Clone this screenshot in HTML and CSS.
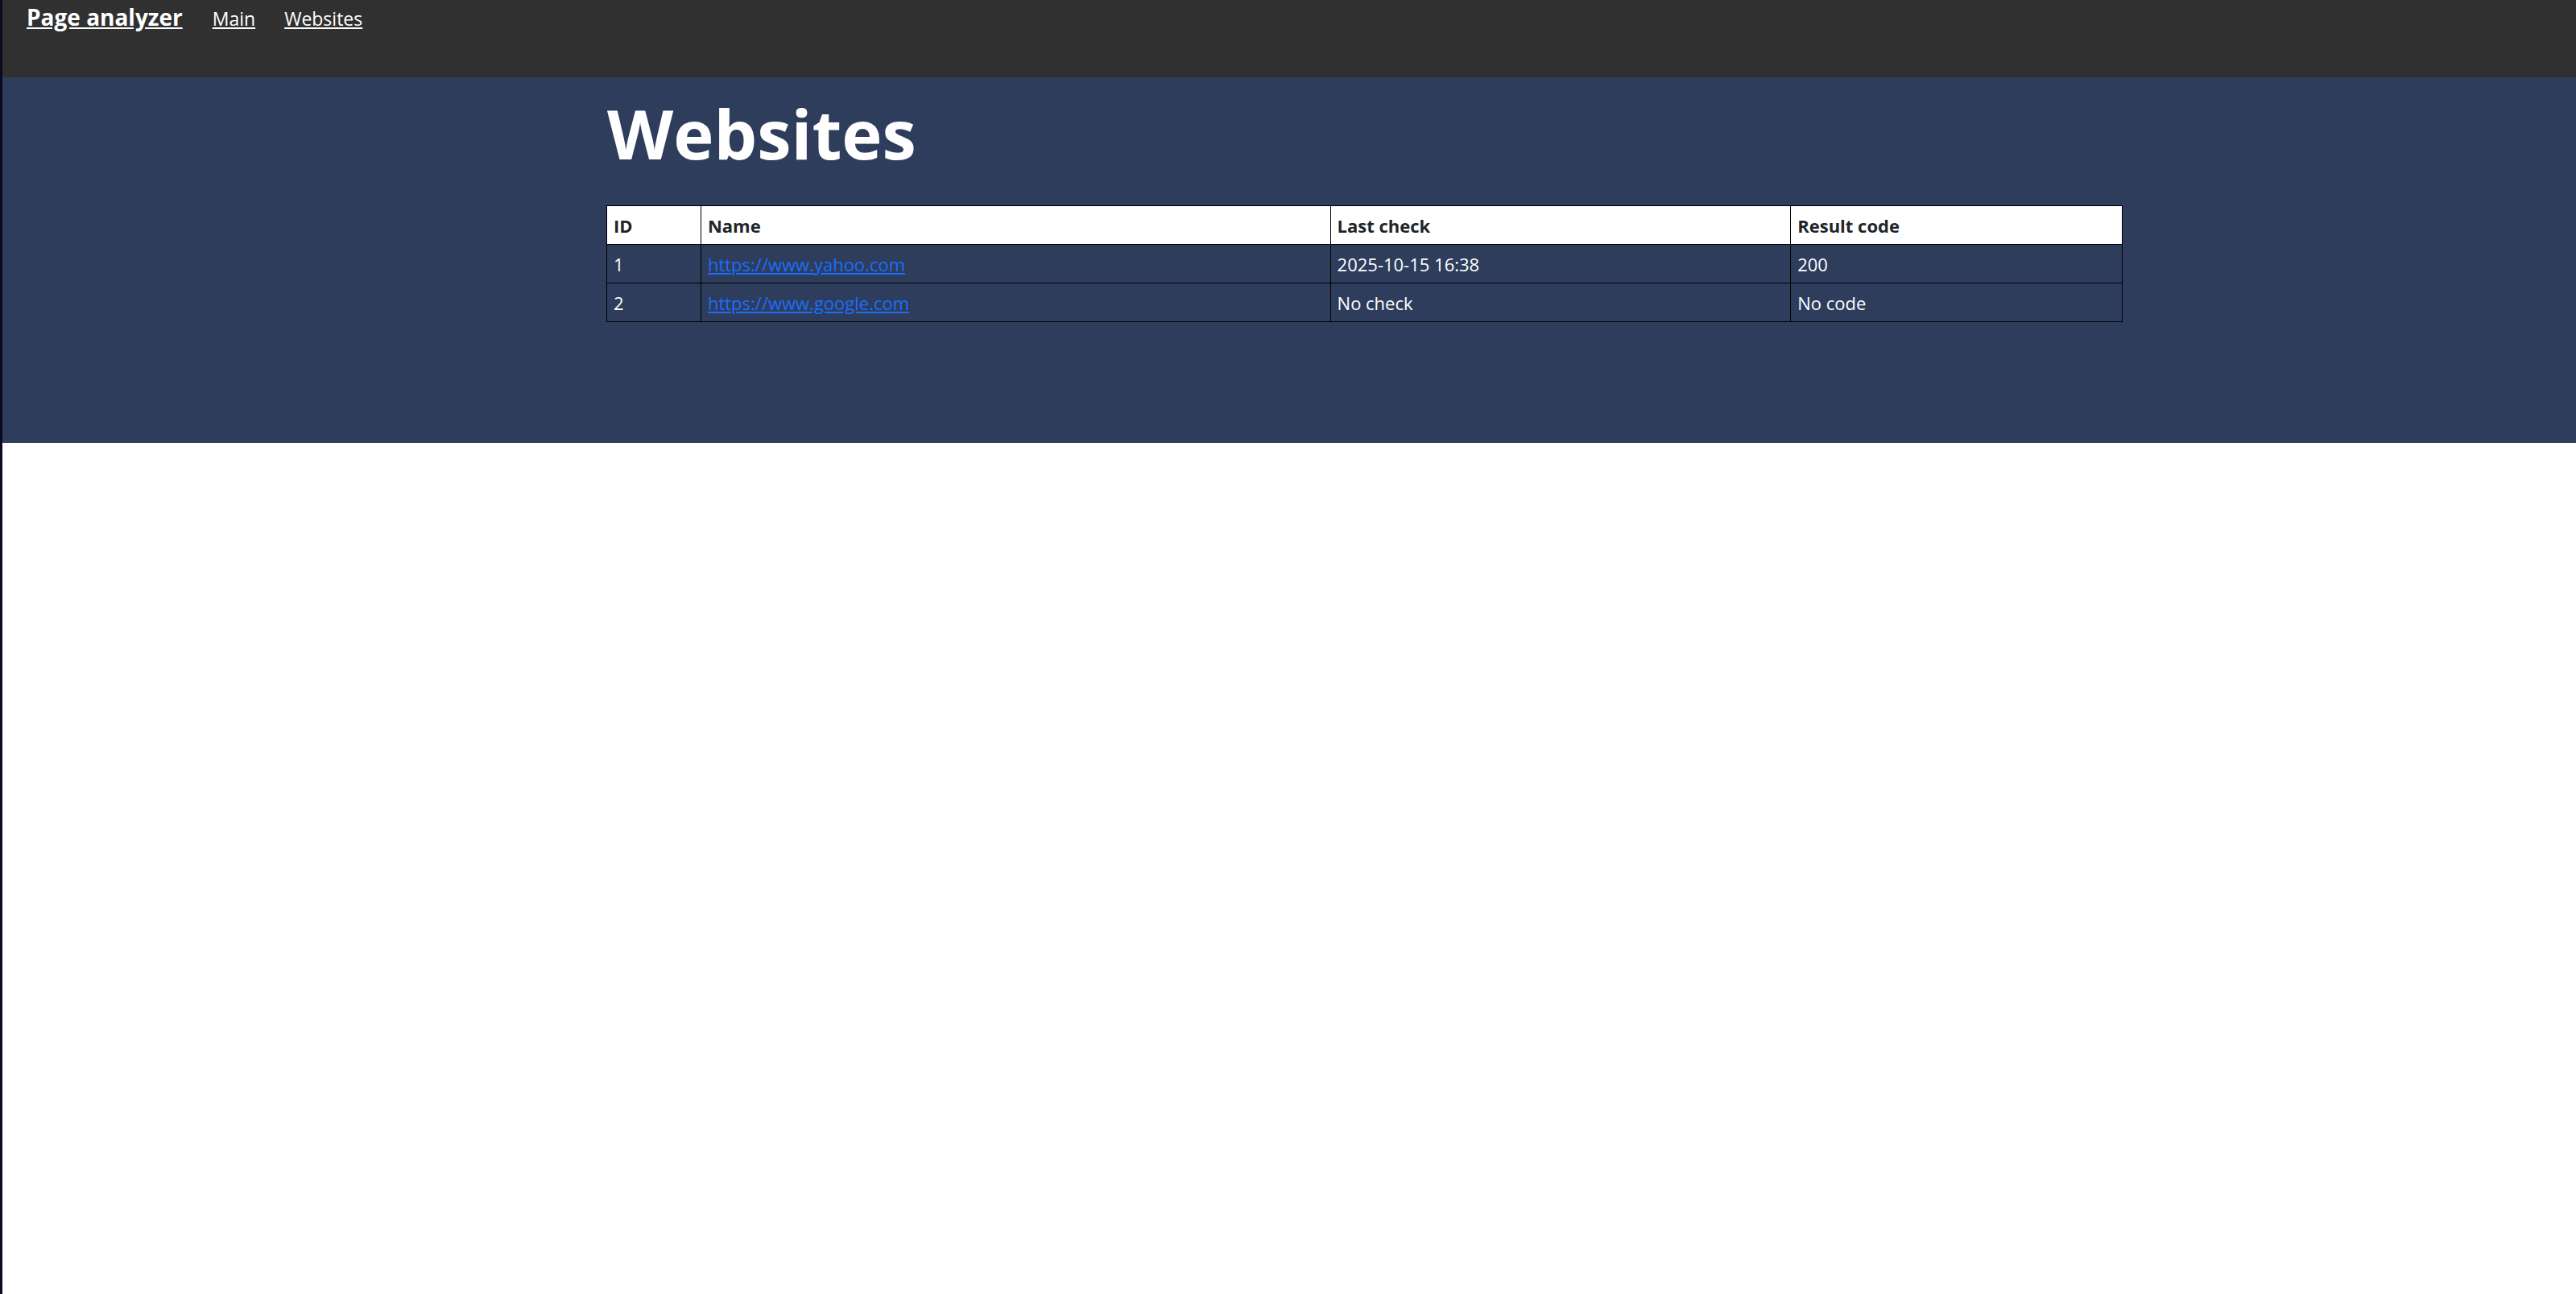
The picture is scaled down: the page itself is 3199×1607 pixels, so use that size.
FILE: index.html
```html
<!DOCTYPE html>
<html lang="en">
<head>
<meta charset="utf-8">
<title>Page analyzer</title>
<link rel="stylesheet" href="styles.css">
</head>
<body>
<header class="navbar">
  <a class="brand" href="#">Page analyzer</a>
  <nav class="nav-links">
    <a href="#">Main</a>
    <a href="#">Websites</a>
  </nav>
</header>
<main class="hero">
  <div class="container">
    <h1 class="title">Websites</h1>
    <table class="sites">
      <thead>
        <tr>
          <th class="col-id">ID</th>
          <th class="col-name">Name</th>
          <th class="col-check">Last check</th>
          <th class="col-code">Result code</th>
        </tr>
      </thead>
      <tbody>
        <tr>
          <td>1</td>
          <td><a href="#">https://www.yahoo.com</a></td>
          <td>2025-10-15 16:38</td>
          <td>200</td>
        </tr>
        <tr>
          <td>2</td>
          <td><a href="#">https://www.google.com</a></td>
          <td>No check</td>
          <td>No code</td>
        </tr>
      </tbody>
    </table>
  </div>
</main>
</body>
</html>
```

FILE: styles.css
```css
html, body {
  margin: 0;
  padding: 0;
}

body {
  min-height: 100vh;
  border-left: 3px solid #0b0b1f;
  background: #ffffff;
  font-family: "Open Sans", "Noto Sans", sans-serif;
  box-sizing: border-box;
}

.navbar {
  display: flex;
  align-items: flex-start;
  gap: 37px;
  height: 96px;
  box-sizing: border-box;
  padding: 2px 0 0 30px;
  background: #303030;
}

.brand {
  color: #ffffff;
  font-size: 28px;
  font-weight: 700;
  line-height: 38px;
  text-decoration: underline;
}

.nav-links {
  display: flex;
  gap: 36px;
  padding-top: 2px;
}

.nav-links a {
  color: #ffffff;
  font-size: 23px;
  line-height: 38px;
  text-decoration: underline;
}

.hero {
  height: 454px;
  box-sizing: border-box;
  padding-top: 16px;
  background: #2e3d5c;
}

.container {
  margin-left: 750px;
  width: 1883px;
}

.title {
  margin: 0 0 37px 1px;
  color: #ffffff;
  font-size: 85px;
  font-weight: 700;
  line-height: 106px;
}

.sites {
  width: 100%;
  border-collapse: collapse;
  font-size: 22px;
}

.sites th,
.sites td {
  height: 48px;
  box-sizing: border-box;
  padding: 0 8px;
  border: 1px solid #000000;
  text-align: left;
  vertical-align: middle;
}

.sites th {
  background: #ffffff;
  color: #212529;
  font-weight: 700;
}

.sites td {
  color: #ffffff;
}

.sites td a {
  color: #1a6dfd;
  text-decoration: underline;
}

.col-id { width: 117px; }
.col-name { width: 782px; }
.col-check { width: 572px; }
.col-code { width: 412px; }
```
